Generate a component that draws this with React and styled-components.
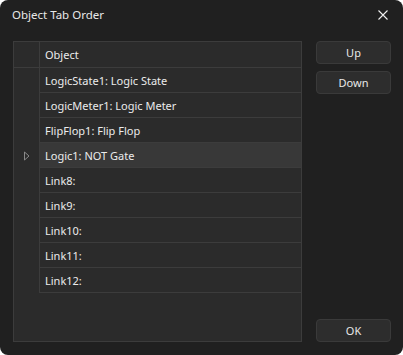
import React from 'react';
import styled, { createGlobalStyle } from 'styled-components';

const GlobalStyle = createGlobalStyle`
  html, body {
    margin: 0;
    padding: 0;
    background: #ffffff;
  }
  body {
    font-family: 'Noto Sans', 'Open Sans', sans-serif;
    font-size: 11px;
  }
`;

const Window = styled.div`
  width: 403px;
  height: 355px;
  box-sizing: border-box;
  background: #202020;
  border-radius: 8px;
  color: #e6e6e6;
  display: flex;
  flex-direction: column;
  overflow: hidden;
`;

const TitleBar = styled.div`
  height: 29px;
  display: flex;
  align-items: center;
  justify-content: space-between;
  padding: 0 15px 0 12px;
  font-size: 11.5px;
  color: #e8e8e8;
`;

const CloseButton = styled.div`
  width: 10px;
  height: 10px;
  display: flex;
  align-items: center;
  justify-content: center;
`;

const Body = styled.div`
  flex: 1;
  display: flex;
  gap: 14px;
  padding: 12px 12px 13px 13px;
`;

const Grid = styled.div`
  width: 290px;
  box-sizing: border-box;
  border: 1px solid #3c3c3c;
  background: #2b2b2b;
  display: flex;
  flex-direction: column;
`;

const Row = styled.div`
  display: flex;
  height: ${(p) => (p.$header ? 26 : 25)}px;
  box-sizing: border-box;
  background: ${(p) => (p.$selected ? '#383838' : 'transparent')};
`;

const RowHeader = styled.div`
  width: 26px;
  flex: none;
  box-sizing: border-box;
  border-right: 1px solid #3c3c3c;
  border-bottom: ${(p) => (p.$header ? '1px solid #3c3c3c' : 'none')};
  background: #2b2b2b;
  display: flex;
  align-items: center;
  justify-content: center;
`;

const Cell = styled.div`
  flex: 1;
  box-sizing: border-box;
  border-bottom: 1px solid #3c3c3c;
  padding-left: 5px;
  display: flex;
  align-items: center;
  color: #ececec;
  white-space: nowrap;
`;

const Side = styled.div`
  flex: 1;
  display: flex;
  flex-direction: column;
  gap: 7px;
`;

const Button = styled.button`
  width: 75px;
  height: 23px;
  box-sizing: border-box;
  border: 1px solid #3a3a3a;
  border-radius: 4px;
  background: #2d2d2d;
  color: #e8e8e8;
  font-family: inherit;
  font-size: 11px;
  padding: 0;
  margin-top: ${(p) => (p.$bottom ? 'auto' : '0')};
`;

const rows = [
  'LogicState1: Logic State',
  'LogicMeter1: Logic Meter',
  'FlipFlop1: Flip Flop',
  'Logic1: NOT Gate',
  'Link8:',
  'Link9:',
  'Link10:',
  'Link11:',
  'Link12:',
];

const Arrow = () => (
  <svg width="8" height="10" viewBox="0 0 8 10">
    <path d="M1.5 1 L6 5 L1.5 9 Z" fill="none" stroke="#8a8a8a" strokeWidth="1" strokeLinejoin="round" />
  </svg>
);

export default function App() {
  return (
    <>
      <GlobalStyle />
      <Window>
        <TitleBar>
          <span>Object Tab Order</span>
          <CloseButton>
            <svg width="10" height="10" viewBox="0 0 10 10">
              <path d="M0.5 0.5 L9.5 9.5 M9.5 0.5 L0.5 9.5" stroke="#f0f0f0" strokeWidth="1.1" />
            </svg>
          </CloseButton>
        </TitleBar>
        <Body>
          <Grid>
            <Row $header>
              <RowHeader $header />
              <Cell>Object</Cell>
            </Row>
            {rows.map((r, i) => (
              <Row key={r} $selected={i === 3}>
                <RowHeader>{i === 3 && <Arrow />}</RowHeader>
                <Cell>{r}</Cell>
              </Row>
            ))}
          </Grid>
          <Side>
            <Button>Up</Button>
            <Button>Down</Button>
            <Button $bottom>OK</Button>
          </Side>
        </Body>
      </Window>
    </>
  );
}
